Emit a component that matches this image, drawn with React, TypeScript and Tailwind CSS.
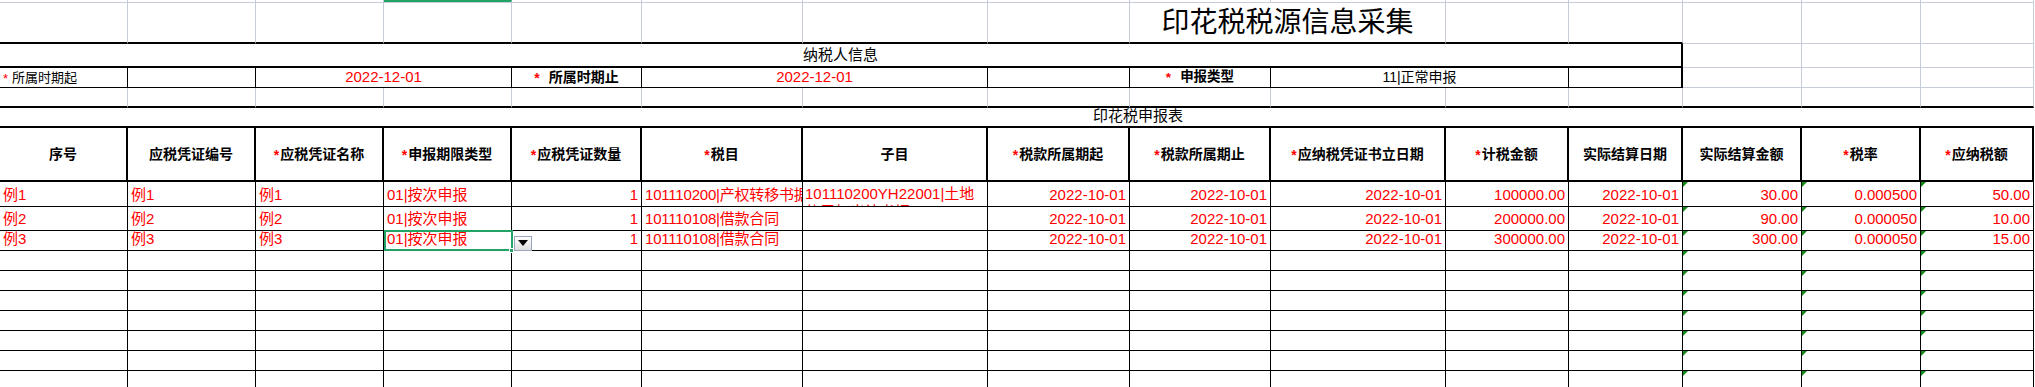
import React from 'react';

// sheet gridline colour
const grid = 'border-r border-b border-r-[#c6ccd9] border-b-[#c6ccd9]';
const thickBottom = 'border-r border-r-[#c6ccd9] border-b-2 border-b-black';

const Req = () => <span className="relative top-[1px] mr-[1px] text-[#ff0000]">*</span>;

const headers: [string, boolean][] = [
  ['序号', false],
  ['应税凭证编号', false],
  ['应税凭证名称', true],
  ['申报期限类型', true],
  ['应税凭证数量', true],
  ['税目', true],
  ['子目', false],
  ['税款所属期起', true],
  ['税款所属期止', true],
  ['应纳税凭证书立日期', true],
  ['计税金额', true],
  ['实际结算日期', false],
  ['实际结算金额', false],
  ['税率', true],
  ['应纳税额', true],
];

const rows: string[][] = [
  ['例1', '例1', '例1', '01|按次申报', '1', '101110200|产权转移书据', '101110200YH22001|土地使用权出让书据', '2022-10-01', '2022-10-01', '2022-10-01', '100000.00', '2022-10-01', '30.00', '0.000500', '50.00'],
  ['例2', '例2', '例2', '01|按次申报', '1', '101110108|借款合同', '', '2022-10-01', '2022-10-01', '2022-10-01', '200000.00', '2022-10-01', '90.00', '0.000050', '10.00'],
  ['例3', '例3', '例3', '01|按次申报', '1', '101110108|借款合同', '', '2022-10-01', '2022-10-01', '2022-10-01', '300000.00', '2022-10-01', '300.00', '0.000050', '15.00'],
];

const cols = Array.from({ length: 15 }, (_, i) => i);
const emptyRows = [0, 1, 2, 3, 4, 5, 6];

// green "number stored as text" marker
const Flag = () => (
  <span className="absolute left-0 top-0 h-0 w-0 border-t-[5px] border-r-[5px] border-t-[#138a13] border-r-transparent" />
);

const Selected = () => (
  <>
    <span className="pointer-events-none absolute -top-[1px] left-0 z-10 h-[21px] w-[129px] border-2 border-[#21a366]" />
    <span className="absolute -bottom-[3px] -right-[3px] z-10 h-[5px] w-[5px] border border-white bg-[#21a366]" />
    <span className="absolute left-[130px] top-[5px] z-10 flex h-[15px] w-[18px] items-start justify-center border border-[#9aa6bd] bg-gradient-to-b from-white to-[#dedede] pt-[3px]">
      <span className="h-0 w-0 border-l-[5px] border-r-[5px] border-t-[6px] border-l-transparent border-r-transparent border-t-black" />
    </span>
  </>
);

function DataCell({ value, col, row }: { value: string; col: number; row: number }) {
  const right = col === 4 || col >= 7;
  if (col === 6) {
    // wrapped text, second line is clipped by the row height
    return (
      <div className="overflow-hidden border-b border-r border-black pl-[2px] pt-[3px] text-[15px] leading-[18px] text-[#ff0000]">
        {value}
      </div>
    );
  }
  return (
    <div
      className={`relative flex items-end whitespace-nowrap border-b border-r border-black pb-[2px] text-[15px] leading-[18px] text-[#ff0000] ${
        right ? 'justify-end pr-[3px]' : 'pl-[3px]'
      } ${col === 5 ? 'overflow-hidden tracking-[-0.2px]' : ''}`}
    >
      {value}
      {col >= 12 && <Flag />}
      {row === 2 && col === 3 && <Selected />}
    </div>
  );
}

export default function App() {
  return (
    <div className="h-[387px] w-[2035px] overflow-hidden bg-white font-['Liberation_Sans','Noto_Sans_CJK_SC',sans-serif] text-black">
      <div className="grid grid-cols-[128px_128px_128px_128px_130px_161px_185px_142px_141px_175px_123px_114px_119px_119px_113px] grid-rows-[3px_41px_24px_20px_20px_20px_54px_25px_24px_20px_20px_20px_20px_20px_20px_20px_20px]">
        {/* column header strip */}
        {cols.map((i) => (
          <div key={`h${i}`} className={`${grid} ${i === 3 ? 'border-t-2 border-t-[#21a366]' : ''}`} />
        ))}

        {/* title */}
        {cols.slice(0, 8).map((i) => (
          <div key={`t${i}`} className={thickBottom} />
        ))}
        <div className={`col-span-2 flex items-end justify-center pb-[3px] text-[28px] leading-[32px] ${thickBottom}`}>
          印花税税源信息采集
        </div>
        <div className={thickBottom} />
        <div className={thickBottom} />
        <div className={grid} />
        <div className={grid} />
        <div className={grid} />

        {/* taxpayer info */}
        <div className="col-span-12 flex items-end justify-center border-b-2 border-r-2 border-black pb-[2px] text-[15px] leading-[18px]">
          纳税人信息
        </div>
        <div className={grid} />
        <div className={grid} />
        <div className={grid} />

        {/* period row */}
        <div className="flex items-center border-b border-r border-black pl-[3px] text-[13px]">
          <Req />
          <span className="ml-[3px]">所属时期起</span>
        </div>
        <div className="border-b border-r border-black" />
        <div className="col-span-2 flex items-center justify-center border-b border-r border-black text-[15px] text-[#ff0000]">
          2022-12-01
        </div>
        <div className="flex items-center justify-center gap-[8px] border-b border-r border-black text-[14px] font-bold">
          <Req />
          <span>所属时期止</span>
        </div>
        <div className="col-span-2 flex items-center justify-center border-b border-r border-black text-[15px] text-[#ff0000]">
          2022-12-01
        </div>
        <div className="border-b border-r border-black" />
        <div className="flex items-center justify-center gap-[8px] border-b border-r border-black text-[13.5px] font-bold">
          <Req />
          <span>申报类型</span>
        </div>
        <div className="col-span-2 flex items-center justify-center border-b border-r border-black text-[14px]">
          11|正常申报
        </div>
        <div className="border-b border-r-2 border-black" />
        <div className={grid} />
        <div className={grid} />
        <div className={grid} />

        {/* spacer row */}
        {cols.map((i) => (
          <div key={`s${i}`} className={thickBottom} />
        ))}

        {/* declaration table caption */}
        <div className="col-span-15 flex items-end overflow-hidden border-b-2 border-black pb-[1px] text-[15px] leading-[18px]">
          <div className="w-[2276px] shrink-0 text-center">印花税申报表</div>
        </div>

        {/* table header */}
        {headers.map(([label, req], i) => (
          <div
            key={`th${i}`}
            className="flex items-center justify-center whitespace-nowrap border-b-2 border-r-2 border-black text-[14px] font-bold"
          >
            {req && <Req />}
            {label}
          </div>
        ))}

        {rows.map((r, ri) =>
          r.map((v, ci) => <DataCell key={`d${ri}-${ci}`} value={v} col={ci} row={ri} />)
        )}

        {emptyRows.map((ri) =>
          cols.map((ci) => (
            <div key={`e${ri}-${ci}`} className="relative border-b border-r border-black">
              {ci >= 12 && <Flag />}
            </div>
          ))
        )}
      </div>
    </div>
  );
}
